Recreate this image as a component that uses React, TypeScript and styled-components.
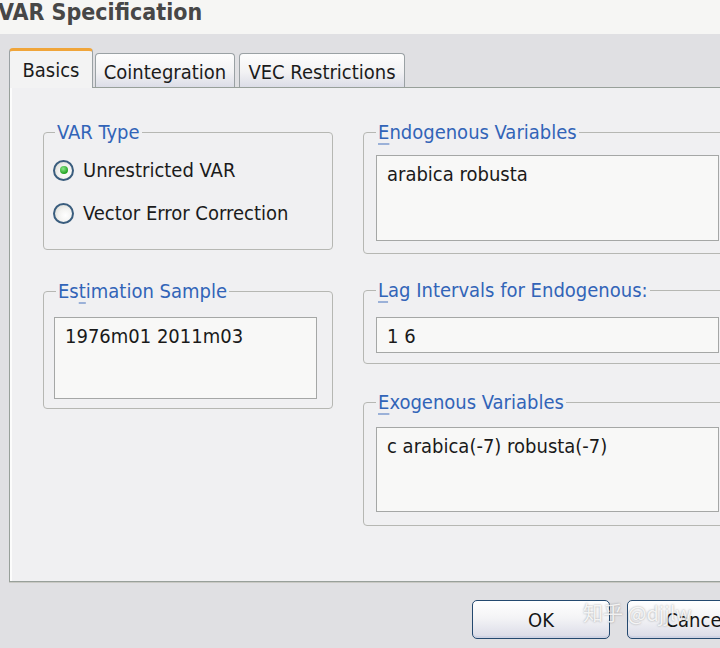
import styled, { createGlobalStyle, css } from 'styled-components';

const GlobalStyle = createGlobalStyle`
  html, body {
    margin: 0;
    padding: 0;
    background: #e0e0e3;
    overflow: hidden;
  }
  body {
    font-family: "DejaVu Sans Condensed", "DejaVu Sans", sans-serif;
    font-stretch: condensed;
    font-size: 20px;
    color: #1b1b1b;
  }
`;

const Window = styled.div`
  position: relative;
  width: 780px;
  height: 648px;
`;

const TitleBar = styled.div`
  height: 34px;
  background: #f6f6f4;
  overflow: hidden;
`;

const Title = styled.h1`
  margin: 0 0 0 -2px;
  font-size: 23px;
  line-height: 24px;
  font-weight: bold;
  color: #474747;
`;

const Body = styled.div`
  padding: 14px 9px 0 9px;
`;

const TabStrip = styled.div`
  display: flex;
  align-items: flex-end;
  height: 40px;
  margin-bottom: -1px;
  position: relative;
  z-index: 1;
`;

const Tab = styled.div<{ $active?: boolean; $w: number; $mr?: number }>`
  box-sizing: border-box;
  width: ${p => p.$w}px;
  margin-right: ${p => p.$mr ?? 0}px;
  display: flex;
  justify-content: center;
  line-height: 22px;
  border: 1px solid #9aa1a4;
  border-bottom: none;
  border-radius: 4px 4px 0 0;
  ${p =>
    p.$active
      ? css`
          height: 40px;
          padding-top: 8px;
          border-top: 3px solid #f0a53a;
          background: #f3f3f3;
        `
      : css`
          height: 34px;
          margin-bottom: 1px;
          padding-top: 7px;
          background: linear-gradient(#fdfdfd, #f2f2f4 55%, #dcdde7);
        `}
`;

const Panel = styled.div`
  box-sizing: border-box;
  height: 495px;
  border: 1px solid #98a09a;
  background: #f0f0f2;
  box-shadow: inset 2px 0 0 #fcfcfc, 0 1px 0 #c9c9c4;
  padding: 33px 0 0 33px;
  display: grid;
  grid-template-columns: 290px 369px;
  column-gap: 30px;
  align-items: start;
`;

const Column = styled.div`
  display: flex;
  flex-direction: column;
`;

const Group = styled.fieldset<{ $h: number; $mt?: number; $pt: number; $pl: number }>`
  box-sizing: border-box;
  min-width: 0;
  height: ${p => p.$h}px;
  margin: ${p => p.$mt ?? 0}px 0 0 0;
  padding: ${p => p.$pt}px 12px 0 ${p => p.$pl}px;
  border: 1px solid #b6b7b3;
  border-radius: 4px;
`;

const Legend = styled.legend<{ $ml?: number }>`
  margin-left: ${p => p.$ml ?? 0}px;
  padding: 0 2px;
  line-height: 22px;
  color: #3264b8;
`;

const Mnemonic = styled.span`
  text-decoration: underline;
  text-decoration-color: rgba(50, 100, 184, 0.45);
  text-underline-offset: 4px;
`;

const RadioList = styled.div`
  display: flex;
  flex-direction: column;
  gap: 21px;
`;

const RadioRow = styled.label`
  display: flex;
  align-items: center;
  gap: 9px;
  line-height: 22px;
`;

const RadioDot = styled.span<{ $checked?: boolean }>`
  box-sizing: border-box;
  position: relative;
  width: 21px;
  height: 21px;
  flex: none;
  border-radius: 50%;
  border: 2px solid #3a5d7e;
  background: radial-gradient(circle at 62% 62%, #ffffff 0, #f3f3f1 45%, #d3d4ce 100%);
  ${p =>
    p.$checked &&
    css`
      &::after {
        content: '';
        position: absolute;
        left: 50%;
        top: 50%;
        width: 8px;
        height: 8px;
        margin: -4px 0 0 -4px;
        border-radius: 50%;
        background: radial-gradient(circle at 40% 35%, #8be68b, #22a322 70%);
      }
    `}
`;

const TextBox = styled.div<{ $w: number; $h: number }>`
  box-sizing: border-box;
  width: ${p => p.$w}px;
  height: ${p => p.$h}px;
  padding: 7px 10px;
  border: 1px solid #a5a7a6;
  background: #f8f8f7;
  line-height: 22px;
  color: #1a1a1a;
  white-space: nowrap;
`;

const Footer = styled.div`
  display: flex;
  justify-content: flex-end;
  gap: 17px;
  padding: 18px 6px 0 0;
`;

const Button = styled.button`
  box-sizing: border-box;
  width: 138px;
  height: 39px;
  border: 1px solid #24496f;
  border-radius: 5px;
  background: linear-gradient(#ffffff, #f4f4f6 45%, #dadbe7);
  box-shadow: inset 0 -2px 0 #cfd3e3, inset 0 1px 0 #ffffff;
  font: inherit;
  line-height: 22px;
  color: #151515;
  padding: 0;
`;

const Watermark = styled.div`
  position: absolute;
  left: 583px;
  top: 598px;
  font-family: "Noto Sans CJK SC", "Noto Sans", sans-serif;
  font-size: 20px;
  line-height: 30px;
  color: rgba(255, 255, 255, 0.85);
  text-shadow: 0 0 2px rgba(80, 80, 80, 0.55);
  white-space: nowrap;
  pointer-events: none;
`;

export default function App() {
  return (
    <>
      <GlobalStyle />
      <Window>
        <TitleBar>
          <Title>VAR Specification</Title>
        </TitleBar>
        <Body>
          <TabStrip>
            <Tab $active $w={84} $mr={2}>Basics</Tab>
            <Tab $w={140} $mr={4}>Cointegration</Tab>
            <Tab $w={166}>VEC Restrictions</Tab>
          </TabStrip>
          <Panel>
            <Column>
              <Group $h={129} $pt={16} $pl={9}>
                <Legend $ml={2}>VAR Type</Legend>
                <RadioList>
                  <RadioRow>
                    <RadioDot $checked />
                    Unrestricted VAR
                  </RadioRow>
                  <RadioRow>
                    <RadioDot />
                    Vector Error Correction
                  </RadioRow>
                </RadioList>
              </Group>
              <Group $h={129} $mt={30} $pt={15} $pl={10}>
                <Legend $ml={2}>
                  Es<Mnemonic>t</Mnemonic>imation Sample
                </Legend>
                <TextBox $w={263} $h={82}>1976m01 2011m03</TextBox>
              </Group>
            </Column>
            <Column>
              <Group $h={133} $pt={12} $pl={12}>
                <Legend>
                  <Mnemonic>E</Mnemonic>ndogenous Variables
                </Legend>
                <TextBox $w={343} $h={86}>arabica robusta</TextBox>
              </Group>
              <Group $h={85} $mt={25} $pt={16} $pl={12}>
                <Legend>
                  <Mnemonic>L</Mnemonic>ag Intervals for Endogenous:
                </Legend>
                <TextBox $w={343} $h={36}>1 6</TextBox>
              </Group>
              <Group $h={135} $mt={27} $pt={14} $pl={12}>
                <Legend>
                  <Mnemonic>E</Mnemonic>xogenous Variables
                </Legend>
                <TextBox $w={343} $h={85}>c arabica(-7) robusta(-7)</TextBox>
              </Group>
            </Column>
          </Panel>
          <Footer>
            <Button>OK</Button>
            <Button>Cancel</Button>
          </Footer>
        </Body>
        <Watermark>知乎 @djjlw</Watermark>
      </Window>
    </>
  );
}
